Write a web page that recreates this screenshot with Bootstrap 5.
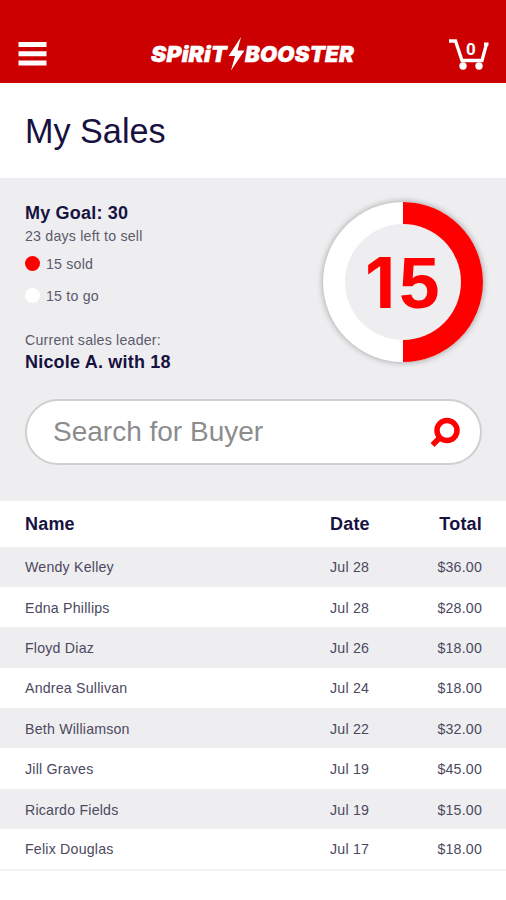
<!DOCTYPE html>
<html lang="en">
<head>
<meta charset="utf-8">
<meta name="viewport" content="width=device-width, initial-scale=1">
<title>My Sales</title>
<link rel="stylesheet" href="https://cdn.jsdelivr.net/npm/bootstrap@5.3.0/dist/css/bootstrap.min.css">
<style>
body{font-family:"Liberation Sans",Arial,sans-serif;color:#17123f;background:#fff;font-size:14.2px;line-height:20px;letter-spacing:.2px;overflow:hidden}
.topbar{height:83px;background:#c00;padding:25px 16px 0 18px}
.brand{margin-left:10px}
.page-title{height:95px;padding:28px 25px 0}
.page-title h1{font-size:34.2px;line-height:40px;letter-spacing:0;font-weight:400}
.summary{height:323px;background:#eeeef0;padding:24px 24px 0 25px}
.goal-row{height:197px}
.strong-line{font-size:18px;line-height:22px;font-weight:700;letter-spacing:.2px}
.days-left{padding-top:2px}
.leader{margin-bottom:1px}
.muted-text{color:#5c5a6c}
.dot{width:15px;height:15px;border-radius:50%;margin:-2px 6px 0 0}
.dot-sold{background:#f00}
.dot-left{background:#fff}
.ring{width:160px;height:160px;margin-right:-1px;filter:drop-shadow(0 0 3px rgba(0,0,0,.35))}
.search-box{height:66px;border:2px solid #cfcfcf;border-radius:33px;padding:0 20px 0 26px;background:#fff}
.search-box input,.search-box input:focus{font-size:28px;line-height:32px;letter-spacing:0;padding:0 0 1px;background:none}
.search-box input::placeholder{color:#8c8c8c;opacity:1}
.sales{table-layout:fixed;--bs-table-bg:transparent;--bs-table-color:#17123f;color:#17123f;border-bottom:2px solid #f4f4f5}
.sales th,.sales td{border:0;padding:0;vertical-align:middle}
.sales th{height:45.5px;font-size:18px;color:#17123f;padding-top:1px}
.sales td{height:40.4px;color:#4c495f;padding-top:1px}
.sales tbody tr:nth-child(odd){background:#eeeef0}
.sales th:first-child,.sales td:first-child{padding-left:25px}
.sales th:last-child,.sales td:last-child{padding-right:24px;text-align:right}
.name-col{width:330px}.date-col{width:70px}
</style>
</head>
<body>
<header class="topbar d-flex justify-content-between align-items-center">
  <svg width="29" height="24" viewBox="0 0 29 24" fill="#fff" aria-label="Menu"><path d="M.5 0h28v5H.5zM.5 9.2h28v5H.5zM.5 18.4h28v5H.5z"/></svg>
  <svg class="brand" width="206" height="36" viewBox="0 0 206 36" fill="#fff" stroke="#fff" stroke-width=".5" font-family="Inter, sans-serif" font-weight="900" font-style="italic" font-size="21.5">
    <text x="1" y="25.8" textLength="76" lengthAdjust="spacingAndGlyphs">SPiRiT</text>
    <path stroke="none" d="M91 1 78.500 20h6.500L81 34.500 94.500 14.500H87.500z"/>
    <text x="95" y="25.8" textLength="109" lengthAdjust="spacingAndGlyphs">BOOSTER</text>
  </svg>
  <svg width="42" height="32" viewBox="0 0 42 32" aria-label="Cart"><path d="M1 3h6.500l6.500 19.500h20L38.500 6M36 6.200h4.500" fill="none" stroke="#fff" stroke-width="3.300"/><circle cx="15" cy="28" r="3.700" fill="#fff"/><circle cx="31" cy="28" r="3.700" fill="#fff"/><text x="23" y="16.500" text-anchor="middle" fill="#fff" font-family="Roboto, sans-serif" font-weight="700" font-size="17">0</text></svg>
</header>
<section class="page-title"><h1 class="m-0">My Sales</h1></section>
<section class="summary">
  <div class="goal-row d-flex justify-content-between align-items-start">
    <div>
      <div class="strong-line">My Goal: 30</div>
      <div class="muted-text days-left mb-2">23 days left to sell</div>
      <div class="muted-text d-flex align-items-center mb-2 pb-1"><span class="dot dot-sold"></span>15 sold</div>
      <div class="muted-text d-flex align-items-center mb-4"><span class="dot dot-left"></span>15 to go</div>
      <div class="muted-text leader">Current sales leader:</div>
      <div class="strong-line">Nicole A. with 18</div>
    </div>
    <svg class="ring overflow-visible" viewBox="0 0 160 160">
      <circle cx="80" cy="80" r="80" fill="#fff"/>
      <path d="M80 0a80 80 0 0 1 0 160z" fill="#f00"/>
      <circle cx="80" cy="80" r="58" fill="#eeeef0"/>
      <text y="106" fill="#f00" font-weight="700" letter-spacing="0"><tspan x="42" font-family="Inter, sans-serif" font-size="70">1</tspan><tspan x="76" font-family="Liberation Sans, sans-serif" font-size="73">5</tspan></text>
    </svg>
  </div>
  <form class="search-box d-flex align-items-center">
    <input class="form-control border-0 shadow-none" type="text" placeholder="Search for Buyer" aria-label="Search for Buyer">
    <svg class="flex-shrink-0" width="30" height="30" viewBox="0 0 30 30" fill="none" stroke="#f00"><circle cx="17" cy="13.500" r="10" stroke-width="5.500"/><path d="M10 20.500 2.500 28" stroke-width="5.500"/></svg>
  </form>
</section>
<table class="table sales mb-0">
  <colgroup><col class="name-col"><col class="date-col"><col></colgroup>
  <thead><tr><th>Name</th><th>Date</th><th>Total</th></tr></thead>
  <tbody>
    <tr><td>Wendy Kelley</td><td>Jul 28</td><td>$36.00</td></tr>
    <tr><td>Edna Phillips</td><td>Jul 28</td><td>$28.00</td></tr>
    <tr><td>Floyd Diaz</td><td>Jul 26</td><td>$18.00</td></tr>
    <tr><td>Andrea Sullivan</td><td>Jul 24</td><td>$18.00</td></tr>
    <tr><td>Beth Williamson</td><td>Jul 22</td><td>$32.00</td></tr>
    <tr><td>Jill Graves</td><td>Jul 19</td><td>$45.00</td></tr>
    <tr><td>Ricardo Fields</td><td>Jul 19</td><td>$15.00</td></tr>
    <tr><td>Felix Douglas</td><td>Jul 17</td><td>$18.00</td></tr>
  </tbody>
</table>
<script src="https://cdn.jsdelivr.net/npm/bootstrap@5.3.0/dist/js/bootstrap.bundle.min.js"></script>
</body>
</html>
